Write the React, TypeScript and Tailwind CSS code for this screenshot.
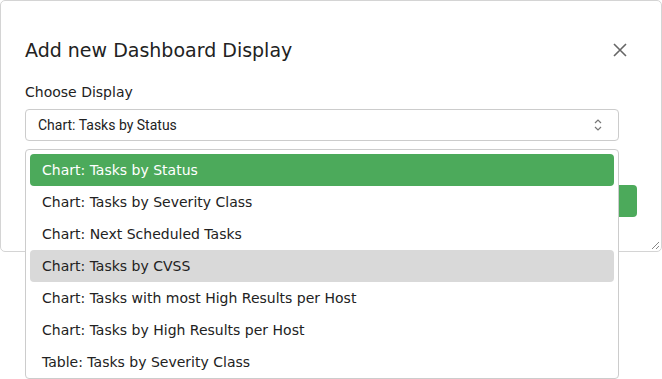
import React from 'react';

const options = [
  'Chart: Tasks by Status',
  'Chart: Tasks by Severity Class',
  'Chart: Next Scheduled Tasks',
  'Chart: Tasks by CVSS',
  'Chart: Tasks with most High Results per Host',
  'Chart: Tasks by High Results per Host',
  'Table: Tasks by Severity Class',
];

const CloseIcon = () => (
  <svg width="16" height="16" viewBox="0 0 16 16" className="text-[#666]">
    <path d="M2 2 L14 14 M14 2 L2 14" stroke="currentColor" strokeWidth="1.6" fill="none" />
  </svg>
);

const UpDownIcon = () => (
  <svg width="10" height="14" viewBox="0 0 10 14" className="text-[#777]">
    <path d="M2 5 L5 2 L8 5 M2 9 L5 12 L8 9" stroke="currentColor" strokeWidth="1.2" fill="none" />
  </svg>
);

const Grip = () => (
  <svg width="10" height="10" viewBox="0 0 10 10" className="absolute right-[1px] bottom-[1px] text-[#888]">
    <path d="M9 2 L2 9 M9 6 L6 9" stroke="currentColor" strokeWidth="1" fill="none" />
  </svg>
);

export default function App() {
  return (
    <div className="relative w-[662px] h-[379px] bg-white overflow-hidden" style={{ fontFamily: '"DejaVu Sans", Verdana, sans-serif' }}>
      <div className="relative w-[662px] h-[252px] border border-[#d4d4d4] rounded-[5px] bg-white">
        <div className="flex items-center justify-between pl-6 pr-[33px] pt-[37px]">
          <h2 className="text-[19px] leading-6 text-[#222]">Add new Dashboard Display</h2>
          <button className="p-0"><CloseIcon /></button>
        </div>
        <div className="pl-6 pt-[22px]">
          <label className="block text-[14px] leading-4 text-[#222]">Choose Display</label>
          <div className="mt-[9px] w-[594px] h-[32px] border border-[#ccc] rounded-[4px] flex items-center justify-between pl-3 pr-[15px]">
            <span className="text-[14px] text-[#222]" style={{ fontFamily: 'Roboto, sans-serif' }}>Chart: Tasks by Status</span>
            <UpDownIcon />
          </div>
        </div>
        <div className="flex justify-end pr-6 pt-[44px]">
          <button className="w-[80px] h-[32px] rounded-[4px] bg-[#4caa5b]" />
        </div>
        <Grip />
      </div>
      <div className="absolute left-[25px] top-[149px] w-[594px] h-[230px] border border-[#ccc] rounded-[4px] bg-white px-[4px] pt-[4px]">
        {options.map((o, i) => (
          <div
            key={o}
            className={
              'h-[32px] flex items-center pl-3 rounded-[4px] text-[14px] ' +
              (i === 0 ? 'bg-[#4caa5b] text-white' : i === 3 ? 'bg-[#d9d9d9] text-[#222]' : 'text-[#222]')
            }
          >
            {o}
          </div>
        ))}
      </div>
    </div>
  );
}
